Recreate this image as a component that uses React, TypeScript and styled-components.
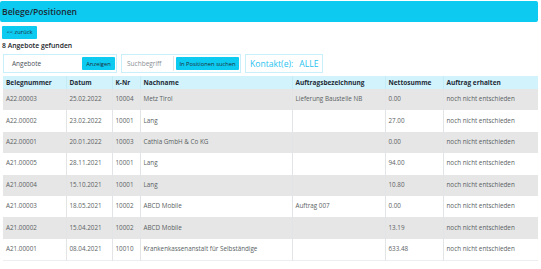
import React from 'react'
import styled, { createGlobalStyle } from 'styled-components'

const GlobalStyle = createGlobalStyle`
  html, body {
    margin: 0;
    padding: 0;
    background: #fff;
    font-family: "Open Sans", "Noto Sans", sans-serif;
    color: #212529;
  }
  * { box-sizing: border-box; }
`

const Page = styled.div`
  width: 541px;
  padding: 1px 3px 0 0;
`

const TitleBar = styled.div`
  height: 21px;
  background: #0dcaf0;
  border-radius: 2px;
  display: flex;
  align-items: center;
  padding-left: 2px;
  font-size: 8.6px;
  font-weight: 600;
  color: #1d2b36;
`

const Content = styled.div`
  display: flex;
  flex-direction: column;
  align-items: flex-start;
  padding-left: 2px;
`

const BackButton = styled.button`
  display: block;
  margin-top: 4px;
  height: 13px;
  width: 35px;
  border: none;
  border-radius: 1px;
  background: #0dcaf0;
  font-family: inherit;
  font-size: 5.8px;
  line-height: 13px;
  color: #1d2b36;
  padding: 0;
`

const Found = styled.div`
  margin-top: 2px;
  font-size: 6.8px;
  font-weight: 600;
  line-height: 10px;
`

const Controls = styled.div`
  margin-top: 3px;
  display: flex;
  gap: 4px;
  padding-left: 1px;
`

const Group = styled.div<{ $width: number }>`
  width: ${({ $width }) => $width}px;
  height: 19px;
  border: 1px solid #c8effa;
  display: flex;
  align-items: center;
  padding: 0 1px 0 2px;
`

const Input = styled.div<{ $muted?: boolean }>`
  flex: 1;
  height: 15px;
  display: flex;
  align-items: center;
  padding-left: ${({ $muted }) => ($muted ? 3 : 6)}px;
  font-size: 6.5px;
  color: ${({ $muted }) => ($muted ? '#8a8f94' : '#495057')};
  border-right: ${({ $muted }) => ($muted ? '1px solid #e3e6e8' : 'none')};
`

const Action = styled.button<{ $width: number }>`
  width: ${({ $width }) => $width}px;
  height: 13px;
  border: none;
  border-radius: 1px;
  background: #0dcaf0;
  font-family: inherit;
  font-size: 5.8px;
  color: #1d2b36;
  padding: 0;
  margin-left: 2px;
  white-space: nowrap;
`

const Contact = styled.div`
  width: 78px;
  height: 19px;
  border: 1px solid #c8effa;
  display: flex;
  align-items: center;
  gap: 6px;
  padding-left: 4px;
  font-size: 8.6px;
  color: #1fc3ee;
`

const Table = styled.table`
  margin-top: 3px;
  margin-left: 3px;
  width: 535px;
  border-collapse: collapse;
  table-layout: fixed;
  font-size: 6.3px;
  line-height: 8px;
  border-bottom: 1px solid #eceeef;
`

const Th = styled.th<{ $w: number }>`
  width: ${({ $w }) => $w}px;
  height: 13px;
  padding: 0 3px;
  text-align: left;
  font-size: 6.5px;
  font-weight: 700;
  background: #d3f3fc;
  border-left: 1px solid #c3ecf7;
  color: #1d2b36;
  &:first-child { border-left: none; }
`

const Row = styled.tr<{ $striped: boolean }>`
  background: ${({ $striped }) => ($striped ? '#e6e6e6' : '#fff')};
`

const Td = styled.td`
  height: 21.4px;
  padding: 0 3px 1px;
  color: #5a5f63;
  border-left: 1px solid #e2e4e6;
  white-space: nowrap;
  overflow: hidden;
  &:first-child { border-left: none; }
`

const columns: [string, number][] = [
  ['Belegnummer', 63],
  ['Datum', 46],
  ['K-Nr', 28],
  ['Nachname', 152],
  ['Auftragsbezeichnung', 93],
  ['Nettosumme', 58],
  ['Auftrag erhalten', 95],
]

const rows = [
  ['A22.00003', '25.02.2022', '10004', 'Metz Tirol', 'Lieferung Baustelle NB', '0.00'],
  ['A22.00002', '23.02.2022', '10001', 'Lang', '', '27.00'],
  ['A22.00001', '20.01.2022', '10003', 'Cathia GmbH & Co KG', '', '0.00'],
  ['A21.00005', '28.11.2021', '10001', 'Lang', '', '94.00'],
  ['A21.00004', '15.10.2021', '10001', 'Lang', '', '10.80'],
  ['A21.00003', '18.05.2021', '10002', 'ABCD Mobile', 'Auftrag 007', '0.00'],
  ['A21.00002', '15.04.2021', '10002', 'ABCD Mobile', '', '13.19'],
  ['A21.00001', '08.04.2021', '10010', 'Krankenkassenanstalt für Selbständige', '', '633.48'],
]

export default function App() {
  return (
    <Page>
      <GlobalStyle />
      <TitleBar>Belege/Positionen</TitleBar>
      <Content>
        <BackButton>&lt;&lt; zurück</BackButton>
        <Found>8 Angebote gefunden</Found>
        <Controls>
          <Group $width={114}>
            <Input>Angebote</Input>
            <Action $width={33}>Anzeigen</Action>
          </Group>
          <Group $width={120}>
            <Input $muted>Suchbegriff</Input>
            <Action $width={63}>In Positionen suchen</Action>
          </Group>
          <Contact>
            <span>Kontakt(e):</span>
            <span>ALLE</span>
          </Contact>
        </Controls>
      </Content>
      <Table>
        <thead>
          <tr>
            {columns.map(([name, w]) => (
              <Th key={name} $w={w}>
                {name}
              </Th>
            ))}
          </tr>
        </thead>
        <tbody>
          {rows.map((r, i) => (
            <Row key={r[0]} $striped={i % 2 === 0}>
              {r.map((c, j) => (
                <Td key={j}>{c}</Td>
              ))}
              <Td>noch nicht entschieden</Td>
            </Row>
          ))}
        </tbody>
      </Table>
    </Page>
  )
}
